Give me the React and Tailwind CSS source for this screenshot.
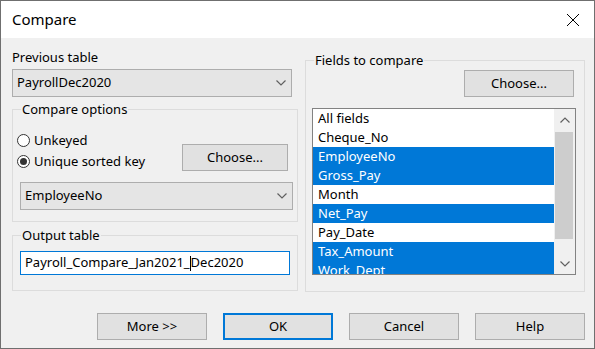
import React from "react";

function Chevron({ up = false }) {
  return (
    <svg width="10" height="6" viewBox="0 0 10 6">
      <path
        d={up ? "M0.5 5.5 L5 1 L9.5 5.5" : "M0.5 0.5 L5 5 L9.5 0.5"}
        fill="none"
        stroke="#606060"
        strokeWidth="1.2"
      />
    </svg>
  );
}

function Combo({ text, className = "" }) {
  return (
    <div
      className={`h-[28px] bg-[#e5e5e5] border border-[#adadad] flex items-center justify-between pl-[4px] pr-[5px] ${className}`}
    >
      <span>{text}</span>
      <Chevron />
    </div>
  );
}

function Btn({ children, className = "" }) {
  return (
    <div
      className={`h-[27px] bg-[#e1e1e1] border border-[#adadad] flex items-center justify-center ${className}`}
    >
      {children}
    </div>
  );
}

function Radio({ checked, label }) {
  return (
    <div className="h-[21px] flex items-center">
      <div className="w-[13px] h-[13px] rounded-full border border-[#333333] bg-white flex items-center justify-center">
        {checked && <div className="w-[7px] h-[7px] rounded-full bg-[#333333]" />}
      </div>
      <span className="ml-[4px]">{label}</span>
    </div>
  );
}

const items = [
  ["All fields", false],
  ["Cheque_No", false],
  ["EmployeeNo", true],
  ["Gross_Pay", true],
  ["Month", false],
  ["Net_Pay", true],
  ["Pay_Date", false],
  ["Tax_Amount", true],
  ["Work_Dept", true],
];

function Listbox() {
  return (
    <div className="mt-[11px] ml-[6px] w-[264px] h-[167px] border border-[#828282] bg-white flex overflow-hidden">
      <div className="flex-1 flex flex-col">
        {items.map(([t, s]) => (
          <div
            key={t}
            className={
              s
                ? "h-[19px] shrink-0 leading-[19px] pl-[5px] bg-[#0078d7] text-white"
                : "h-[19px] shrink-0 leading-[19px] pl-[5px]"
            }
          >
            {t}
          </div>
        ))}
      </div>
      <div className="w-[21px] bg-[#f0f0f0] flex flex-col">
        <div className="h-[21px] flex items-center justify-center shrink-0">
          <Chevron up />
        </div>
        <div className="flex-1">
          <div className="mt-[2px] ml-[1px] w-[18px] h-[107px] bg-[#cdcdcd]" />
        </div>
        <div className="h-[21px] flex items-center justify-center shrink-0">
          <Chevron />
        </div>
      </div>
    </div>
  );
}

export default function App() {
  return (
    <div className="w-[595px] h-[349px] border border-[#6f6f6f] bg-[#f0f0f0] flex flex-col text-[13px] text-black overflow-hidden font-['Noto_Sans',sans-serif]">
      <div className="h-[37px] shrink-0 bg-white flex items-center justify-between pl-[11px] pr-[14px]">
        <span className="text-[15px]">Compare</span>
        <svg width="14" height="14" viewBox="0 0 14 14">
          <path d="M1 1 L13 13 M13 1 L1 13" stroke="#000" strokeWidth="1" />
        </svg>
      </div>
      <div className="flex flex-col pl-[11px] pr-[9px]">
        <div className="flex gap-[7px]">
          <div className="w-[286px] flex flex-col">
            <div className="mt-[11px] leading-[17px]">Previous table</div>
            <Combo text="PayrollDec2020" className="mt-[3px] w-[280px]" />
            <fieldset className="mt-[4px] border border-[#dcdcdc] pb-[11px]">
              <legend className="ml-[8px] px-[1px] leading-[17px]">Compare options</legend>
              <div className="mt-[12px] flex justify-between">
                <div className="ml-[4px]">
                  <Radio checked={false} label="Unkeyed" />
                  <Radio checked label="Unique sorted key" />
                </div>
                <Btn className="mt-[14px] mr-[9px] w-[106px]">Choose...</Btn>
              </div>
              <Combo text="EmployeeNo" className="mt-[10px] ml-[7px] mr-[4px]" />
            </fieldset>
            <fieldset className="mt-[5px] border border-[#dcdcdc] pb-[15px]">
              <legend className="ml-[8px] px-[1px] leading-[17px]">Output table</legend>
              <div className="mt-[7px] ml-[7px] w-[270px] h-[24px] border border-[#0078d7] bg-white flex items-center pl-[4px] whitespace-nowrap">
                <span>Payroll_Compare_Jan2021_</span>
                <span className="inline-block w-px h-[15px] bg-black" />
                <span>Dec2020</span>
              </div>
            </fieldset>
          </div>
          <div className="w-[280px]">
            <fieldset className="mt-[14px] border border-[#dcdcdc] pb-[16px]">
              <legend className="ml-[8px] px-[1px] leading-[17px]">Fields to compare</legend>
              <div className="mt-[1px] flex justify-end">
                <Btn className="mr-[10px] w-[110px]">Choose...</Btn>
              </div>
              <Listbox />
            </fieldset>
          </div>
        </div>
        <div className="mt-[21px] flex gap-[16px] justify-end">
          <Btn className="w-[110px]">More &gt;&gt;</Btn>
          <div className="w-[110px] h-[27px] bg-[#e1e1e1] border-2 border-[#0078d7] flex items-center justify-center">
            OK
          </div>
          <Btn className="w-[110px]">Cancel</Btn>
          <Btn className="w-[110px]">Help</Btn>
        </div>
      </div>
    </div>
  );
}
